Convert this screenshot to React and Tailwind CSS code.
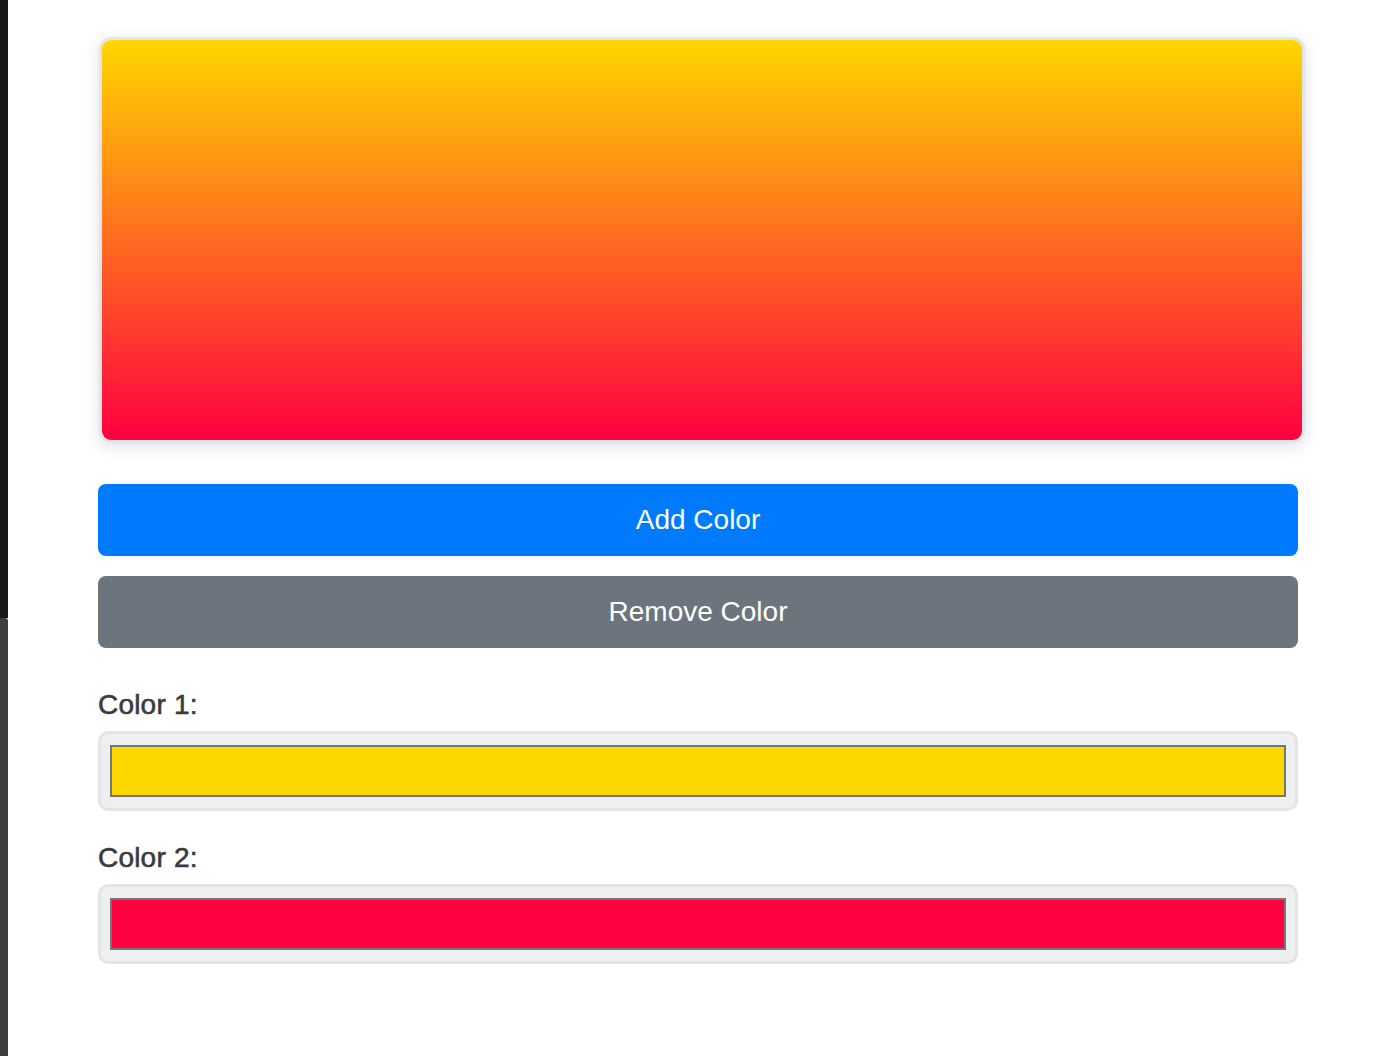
export default function App() {
  return (
    <div className="flex h-[1056px] w-[1388px] overflow-hidden bg-white" style={{ fontFamily: '"Liberation Sans", Arial, sans-serif' }}>
      <div className="flex w-2 shrink-0 flex-col">
        <div className="h-[618px] bg-[#181818]" />
        <div className="flex-1 rounded-tr-[3px] bg-[#3f3f3f]" />
      </div>
      <div className="flex-1">
        <div className="mx-auto flex w-[1200px] flex-col pt-[37px]">
          <div className="ml-[1px] w-[1206px] rounded-[12px] border-[3px] border-[#e1e4e9] shadow-[0_4px_16px_rgba(0,0,0,0.12)]">
            <div className="h-[400px] rounded-[9px] bg-[linear-gradient(to_bottom,#ffd700,#ff0040)]" />
          </div>
          <button className="mt-[41px] h-[72px] w-full rounded-[8px] bg-[#007bff] text-[28px] leading-8 text-white">
            Add Color
          </button>
          <button className="mt-[20px] h-[72px] w-full rounded-[8px] bg-[#6c757d] text-[28px] leading-8 text-white">
            Remove Color
          </button>
          <label className="mt-[41px] text-[28px] leading-8 tracking-[0.2px] text-[#393b40] [-webkit-text-stroke:0.6px_#393b40]">Color 1:</label>
          <div className="mt-[10px] h-[80px] rounded-[10px] border-[3px] border-[#e2e4e8] bg-[#eeeff1] px-[9px] py-[11px]">
            <div className="h-full border-2 border-[#767676] bg-[#ffd700]" />
          </div>
          <label className="mt-[31px] text-[28px] leading-8 tracking-[0.2px] text-[#393b40] [-webkit-text-stroke:0.6px_#393b40]">Color 2:</label>
          <div className="mt-[10px] h-[80px] rounded-[10px] border-[3px] border-[#e2e4e8] bg-[#eeeff1] px-[9px] py-[11px]">
            <div className="h-full border-2 border-[#767676] bg-[#ff0040]" />
          </div>
        </div>
      </div>
    </div>
  );
}
